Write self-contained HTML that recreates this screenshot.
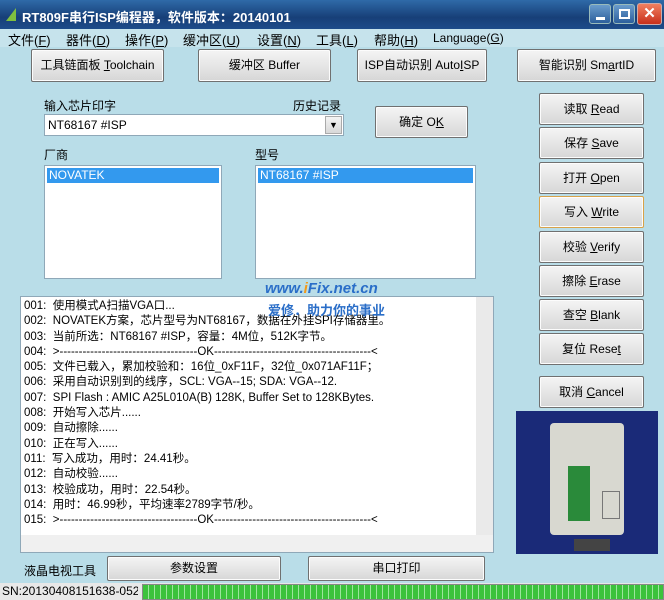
<!DOCTYPE html>
<html><head><meta charset="utf-8"><style>
*{margin:0;padding:0;box-sizing:border-box}
body{width:664px;height:600px;overflow:hidden;background:#b9dde8;font-family:"Liberation Sans","Noto Sans CJK SC",sans-serif;font-size:12px;color:#000;position:relative}
.a{position:absolute}
.title{left:0;top:0;width:664px;height:29px;background:linear-gradient(#2f6aa8,#173f78 60%,#1d4c8a);color:#fff;font-weight:bold;font-size:13px;padding:7px 0 0 22px}
.menu{left:0;top:29px;width:664px;height:18px;background:#c6e3ec;font-size:13px}
.menu span{position:absolute;top:1px}
.btn{position:absolute;border:1px solid #707070;border-radius:2px;background:linear-gradient(#f4f4f4,#e6e6e6 50%,#d6d6d6);text-align:center;font-size:12px;box-shadow:inset 0 0 0 1px #fcfcfc}
.box{position:absolute;background:#fff;border:1px solid #8fa8b8}
.sel{background:#3399ee;color:#fff;height:15px;padding-left:2px;margin:2px;font-size:12px;line-height:15px}
.log div{height:15.3px;line-height:15px;font-size:11.5px;white-space:nowrap}
</style></head><body>
<div class="a title"><span style="position:absolute;left:6px;top:8px;width:10px;height:13px;background:#7fbf3f;clip-path:polygon(0 100%,100% 0,100% 100%)"></span>RT809F串行ISP编程器，软件版本：20140101</div>
<div class="a" style="left:589px;top:4px;width:22px;height:20px;border:1px solid #9bb;border-radius:3px;background:linear-gradient(#6a9ccc,#2c5f9c)"><div style="margin:12px 0 0 6px;width:9px;height:3px;background:#fff"></div></div>
<div class="a" style="left:613px;top:4px;width:22px;height:20px;border:1px solid #9bb;border-radius:3px;background:linear-gradient(#6a9ccc,#2c5f9c)"><div style="margin:4px 0 0 5px;width:11px;height:10px;border:2px solid #fff"></div></div>
<div class="a" style="left:637px;top:3px;width:25px;height:22px;border:1px solid #caa;border-radius:3px;background:linear-gradient(#f08060,#c8301c);color:#fff;font-weight:bold;text-align:center;font-size:15px;line-height:20px">✕</div>
<div class="a menu">
<span style="left:8px">文件(<u>F</u>)</span><span style="left:66px">器件(<u>D</u>)</span><span style="left:125px">操作(<u>P</u>)</span><span style="left:183px">缓冲区(<u>U</u>)</span><span style="left:257px">设置(<u>N</u>)</span><span style="left:316px">工具(<u>L</u>)</span><span style="left:374px">帮助(<u>H</u>)</span><span style="left:433px;font-size:12px;top:2px">Language(<u>G</u>)</span>
</div>
<div class="btn" style="left:31px;top:49px;width:133px;height:33px;line-height:31px">工具链面板 <u>T</u>oolchain</div>
<div class="btn" style="left:198px;top:49px;width:133px;height:33px;line-height:31px">缓冲区 Buffer</div>
<div class="btn" style="left:357px;top:49px;width:130px;height:33px;line-height:31px">ISP自动识别 Auto<u>I</u>SP</div>
<div class="btn" style="left:517px;top:49px;width:139px;height:33px;line-height:31px">智能识别 Sm<u>a</u>rtID</div>
<div class="a" style="left:44px;top:97px">输入芯片印字</div>
<div class="a" style="left:293px;top:97px">历史记录</div>
<div class="box" style="left:44px;top:114px;width:300px;height:22px;padding:3px 0 0 3px">NT68167 #ISP<div style="position:absolute;right:1px;top:1px;width:17px;height:18px;background:linear-gradient(#f4f4f4,#d8d8d8);border:1px solid #aaa;font-size:9px;text-align:center;line-height:16px">▼</div></div>
<div class="btn" style="left:375px;top:106px;width:93px;height:32px;line-height:30px">确定 O<u>K</u></div>
<div class="a" style="left:44px;top:146px">厂商</div>
<div class="a" style="left:255px;top:146px">型号</div>
<div class="box" style="left:44px;top:165px;width:178px;height:114px"><div class="sel">NOVATEK</div></div>
<div class="box" style="left:255px;top:165px;width:221px;height:114px"><div class="sel">NT68167 #ISP</div></div>
<div class="box log" style="left:20px;top:296px;width:474px;height:257px;padding:2px 0 0 3px;overflow:hidden">
<div>001:&nbsp; 使用模式A扫描VGA口...</div>
<div>002:&nbsp; NOVATEK方案，芯片型号为NT68167，数据在外挂SPI存储器里。</div>
<div>003:&nbsp; 当前所选：NT68167 #ISP，容量：4M位，512K字节。</div>
<div>004:&nbsp; &gt;------------------------------------OK-----------------------------------------&lt;</div>
<div>005:&nbsp; 文件已载入，累加校验和：16位_0xF11F，32位_0x071AF11F；</div>
<div>006:&nbsp; 采用自动识别到的线序，SCL: VGA--15; SDA: VGA--12.</div>
<div>007:&nbsp; SPI Flash : AMIC A25L010A(B) 128K, Buffer Set to 128KBytes.</div>
<div>008:&nbsp; 开始写入芯片......</div>
<div>009:&nbsp; 自动擦除......</div>
<div>010:&nbsp; 正在写入......</div>
<div>011:&nbsp; 写入成功，用时：24.41秒。</div>
<div>012:&nbsp; 自动校验......</div>
<div>013:&nbsp; 校验成功，用时：22.54秒。</div>
<div>014:&nbsp; 用时：46.99秒，平均速率2789字节/秒。</div>
<div>015:&nbsp; &gt;------------------------------------OK-----------------------------------------&lt;</div>
<div class="a" style="right:0;top:0;width:17px;height:238px;background:#eaeaea"></div>
<div class="a" style="left:0;bottom:0;width:472px;height:17px;background:#f0f0f0"></div>
</div>
<div class="a" style="left:265px;top:280px;color:#2a6ec8;font-weight:bold;font-style:italic;font-size:15px">www.<span style="color:#f29a1a">i</span>Fix.net.cn</div>
<div class="a" style="left:268px;top:300px;color:#2a6ec8;font-weight:bold;font-size:13px">爱修．助力你的事业</div>
<div class="btn" style="left:539px;top:93px;width:105px;height:32px;line-height:30px">读取 <u>R</u>ead</div>
<div class="btn" style="left:539px;top:127px;width:105px;height:32px;line-height:30px">保存 <u>S</u>ave</div>
<div class="btn" style="left:539px;top:162px;width:105px;height:32px;line-height:30px">打开 <u>O</u>pen</div>
<div class="btn" style="left:539px;top:196px;width:105px;height:32px;line-height:30px;border-color:#d8a24a">写入 <u>W</u>rite</div>
<div class="btn" style="left:539px;top:231px;width:105px;height:32px;line-height:30px">校验 <u>V</u>erify</div>
<div class="btn" style="left:539px;top:265px;width:105px;height:32px;line-height:30px">擦除 <u>E</u>rase</div>
<div class="btn" style="left:539px;top:299px;width:105px;height:32px;line-height:30px">查空 <u>B</u>lank</div>
<div class="btn" style="left:539px;top:333px;width:105px;height:32px;line-height:30px">复位 Rese<u>t</u></div>
<div class="btn" style="left:539px;top:376px;width:105px;height:32px;line-height:30px">取消 <u>C</u>ancel</div>
<div class="a" style="left:516px;top:411px;width:142px;height:143px;background:#1a2a78">
<div class="a" style="left:34px;top:12px;width:74px;height:112px;background:#d8d8d0;border-radius:4px"></div>
<div class="a" style="left:52px;top:55px;width:22px;height:55px;background:#2a8a3a"></div>
<div class="a" style="left:86px;top:80px;width:18px;height:28px;border:1px solid #777"></div>
<div class="a" style="left:58px;top:128px;width:36px;height:12px;background:#444"></div>
</div>
<div class="a" style="left:24px;top:562px">液晶电视工具</div>
<div class="btn" style="left:107px;top:556px;width:174px;height:25px;line-height:23px">参数设置</div>
<div class="btn" style="left:308px;top:556px;width:177px;height:25px;line-height:23px">串口打印</div>
<div class="a" style="left:0;top:583px;width:664px;height:17px;background:#e8e8e8"></div>
<div class="a" style="left:2px;top:584px;font-size:12px">SN:20130408151638-0520</div>
<div class="a" style="left:138px;top:583px;width:4px;height:17px;background:#e8e8e8"></div>
<div class="a" style="left:142px;top:584px;width:522px;height:16px;border:1px solid #888;background:repeating-linear-gradient(90deg,#3cc23c 0 5px,#9de69d 5px 6px)"></div>
</body></html>
